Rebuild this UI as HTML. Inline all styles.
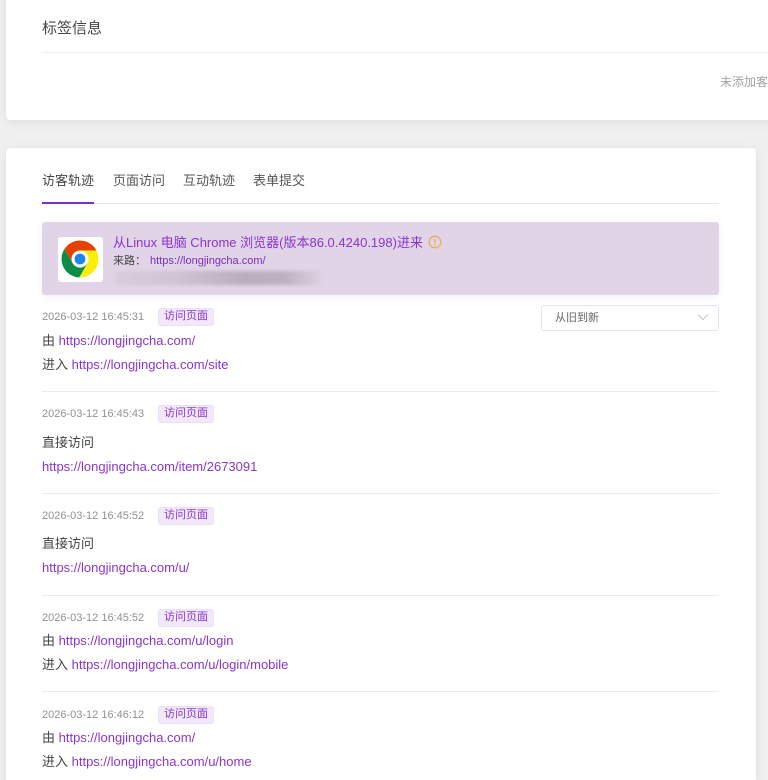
<!DOCTYPE html>
<html lang="zh">
<head>
<meta charset="utf-8">
<style>
html,body{margin:0;padding:0;width:768px;height:780px;overflow:hidden}
body{background:#f0f0f0;font-family:"Liberation Sans","Noto Sans CJK SC",sans-serif;color:#333}
#w{position:relative;width:768px;height:780px;overflow:hidden;background:#f0f0f0;filter:blur(.3px)}
.a{position:absolute;white-space:nowrap}
.card{position:absolute;background:#fff;border-radius:4px;box-shadow:0 2px 10px rgba(0,0,0,.08)}
.line{position:absolute;left:42px;width:677px;height:1px;background:#ebebeb}
.time{position:absolute;left:42px;font-size:11px;line-height:16px;color:#919191;white-space:nowrap}
.tag{position:absolute;left:158px;width:54px;height:16px;line-height:15px;text-align:center;font-size:11px;color:#8a35cf;background:#f1e8fa;border:1px solid #ebe0f7;border-radius:3px}
.row{position:absolute;left:42px;font-size:13px;line-height:18px;color:#444;white-space:nowrap}
.row b{font-weight:normal;color:#8a35cf}
.tab{position:absolute;top:172px;font-size:13px;line-height:18px;color:#555;white-space:nowrap}
</style>
</head>
<body>
<div id="w">
<div class="card" style="left:6px;top:-10px;width:800px;height:130px"></div>
<div class="a" style="left:42px;top:19px;font-size:15px;line-height:20px;color:#444">标签信息</div>
<div class="a" style="left:42px;top:52px;width:726px;height:1px;background:#eeeeee"></div>
<div class="a" style="left:720px;top:73px;font-size:12px;line-height:18px;color:#a3a3a3">未添加客户标签</div>

<div class="card" style="left:6px;top:148px;width:750px;height:640px"></div>

<div class="tab" style="left:42px;color:#444">访客轨迹</div>
<div class="tab" style="left:113px">页面访问</div>
<div class="tab" style="left:183px">互动轨迹</div>
<div class="tab" style="left:253px">表单提交</div>
<div class="a" style="left:42px;top:203px;width:677px;height:1px;background:#e8e8e8"></div>
<div class="a" style="left:42px;top:202px;width:52px;height:2px;background:#7a2fd0"></div>

<div class="a" style="left:42px;top:222px;width:677px;height:73px;background:#e0d4e6;border-radius:3px;box-shadow:0 2px 8px rgba(0,0,0,.05)"></div>
<div class="a" style="left:58px;top:237px;width:45px;height:45px;background:#fff;border-radius:3px"></div>
<svg class="a" style="left:58px;top:237px" width="45" height="45" viewBox="0 0 45 45">
  <path d="M6.44 12.05 A18.5 18.5 0 0 1 38.4 13.5 L22 13.5 A8.5 8.5 0 0 0 14.64 26.25 Z" fill="#e64100"/>
  <path d="M38.4 13.5 A18.5 18.5 0 0 1 21.2 40.45 L29.36 26.25 A8.5 8.5 0 0 0 22 13.5 Z" fill="#fbee0a"/>
  <path d="M21.2 40.45 A18.5 18.5 0 0 1 6.44 12.05 L14.64 26.25 A8.5 8.5 0 0 0 29.36 26.25 Z" fill="#0d8c47"/>
  <circle cx="22" cy="22" r="5.4" fill="#1d86e6"/>
</svg>
<div class="a" style="left:113px;top:234px;font-size:13px;line-height:18px;color:#8a35cf">从Linux 电脑 Chrome 浏览器(版本86.0.4240.198)进来</div>
<svg class="a" style="left:428px;top:235px" width="14" height="14" viewBox="0 0 14 14">
  <circle cx="7" cy="7" r="5.8" fill="none" stroke="#f0a840" stroke-width="1.1"/>
  <path d="M7 3.6V8M7 9.4V10.6" stroke="#f0a840" stroke-width="1.2" fill="none"/>
</svg>
<div class="a" style="left:113px;top:253px;font-size:11px;line-height:16px;color:#444">来路：</div>
<div class="a" style="left:150px;top:253px;font-size:11px;line-height:16px;color:#7a2fc0">https://longjingcha.com/</div>
<div class="a" style="left:115px;top:271px;width:208px;height:14px;border-radius:4px;background:linear-gradient(90deg,#d8cddd 0%,#cfc4d4 30%,#b9aebe 62%,#bdb2c2 82%,#ddd3e3 100%);filter:blur(1.5px)"></div>

<div class="time" style="top:309px">2026-03-12 16:45:31</div>
<div class="tag" style="top:308px">访问页面</div>
<div class="a" style="left:541px;top:305px;width:176px;height:24px;border:1px solid #e4e2ec;border-radius:3px;background:#fff"></div>
<div class="a" style="left:555px;top:310px;font-size:11px;line-height:17px;color:#666">从旧到新</div>
<svg class="a" style="left:697px;top:313px" width="12" height="9" viewBox="0 0 12 9"><path d="M1 1.5 L6 6.5 L11 1.5" fill="none" stroke="#c6c6c6" stroke-width="1"/></svg>
<div class="row" style="top:332px">由 <b>https://longjingcha.com/</b></div>
<div class="row" style="top:356px">进入 <b>https://longjingcha.com/site</b></div>
<div class="line" style="top:391px"></div>

<div class="time" style="top:406px">2026-03-12 16:45:43</div>
<div class="tag" style="top:405px">访问页面</div>
<div class="row" style="top:434px">直接访问</div>
<div class="row" style="top:458px"><b>https://longjingcha.com/item/2673091</b></div>
<div class="line" style="top:493px"></div>

<div class="time" style="top:508px">2026-03-12 16:45:52</div>
<div class="tag" style="top:507px">访问页面</div>
<div class="row" style="top:535px">直接访问</div>
<div class="row" style="top:559px"><b>https://longjingcha.com/u/</b></div>
<div class="line" style="top:595px"></div>

<div class="time" style="top:610px">2026-03-12 16:45:52</div>
<div class="tag" style="top:609px">访问页面</div>
<div class="row" style="top:632px">由 <b>https://longjingcha.com/u/login</b></div>
<div class="row" style="top:656px">进入 <b>https://longjingcha.com/u/login/mobile</b></div>
<div class="line" style="top:691px"></div>

<div class="time" style="top:707px">2026-03-12 16:46:12</div>
<div class="tag" style="top:706px">访问页面</div>
<div class="row" style="top:729px">由 <b>https://longjingcha.com/</b></div>
<div class="row" style="top:753px">进入 <b>https://longjingcha.com/u/home</b></div>
</div>
</body>
</html>
